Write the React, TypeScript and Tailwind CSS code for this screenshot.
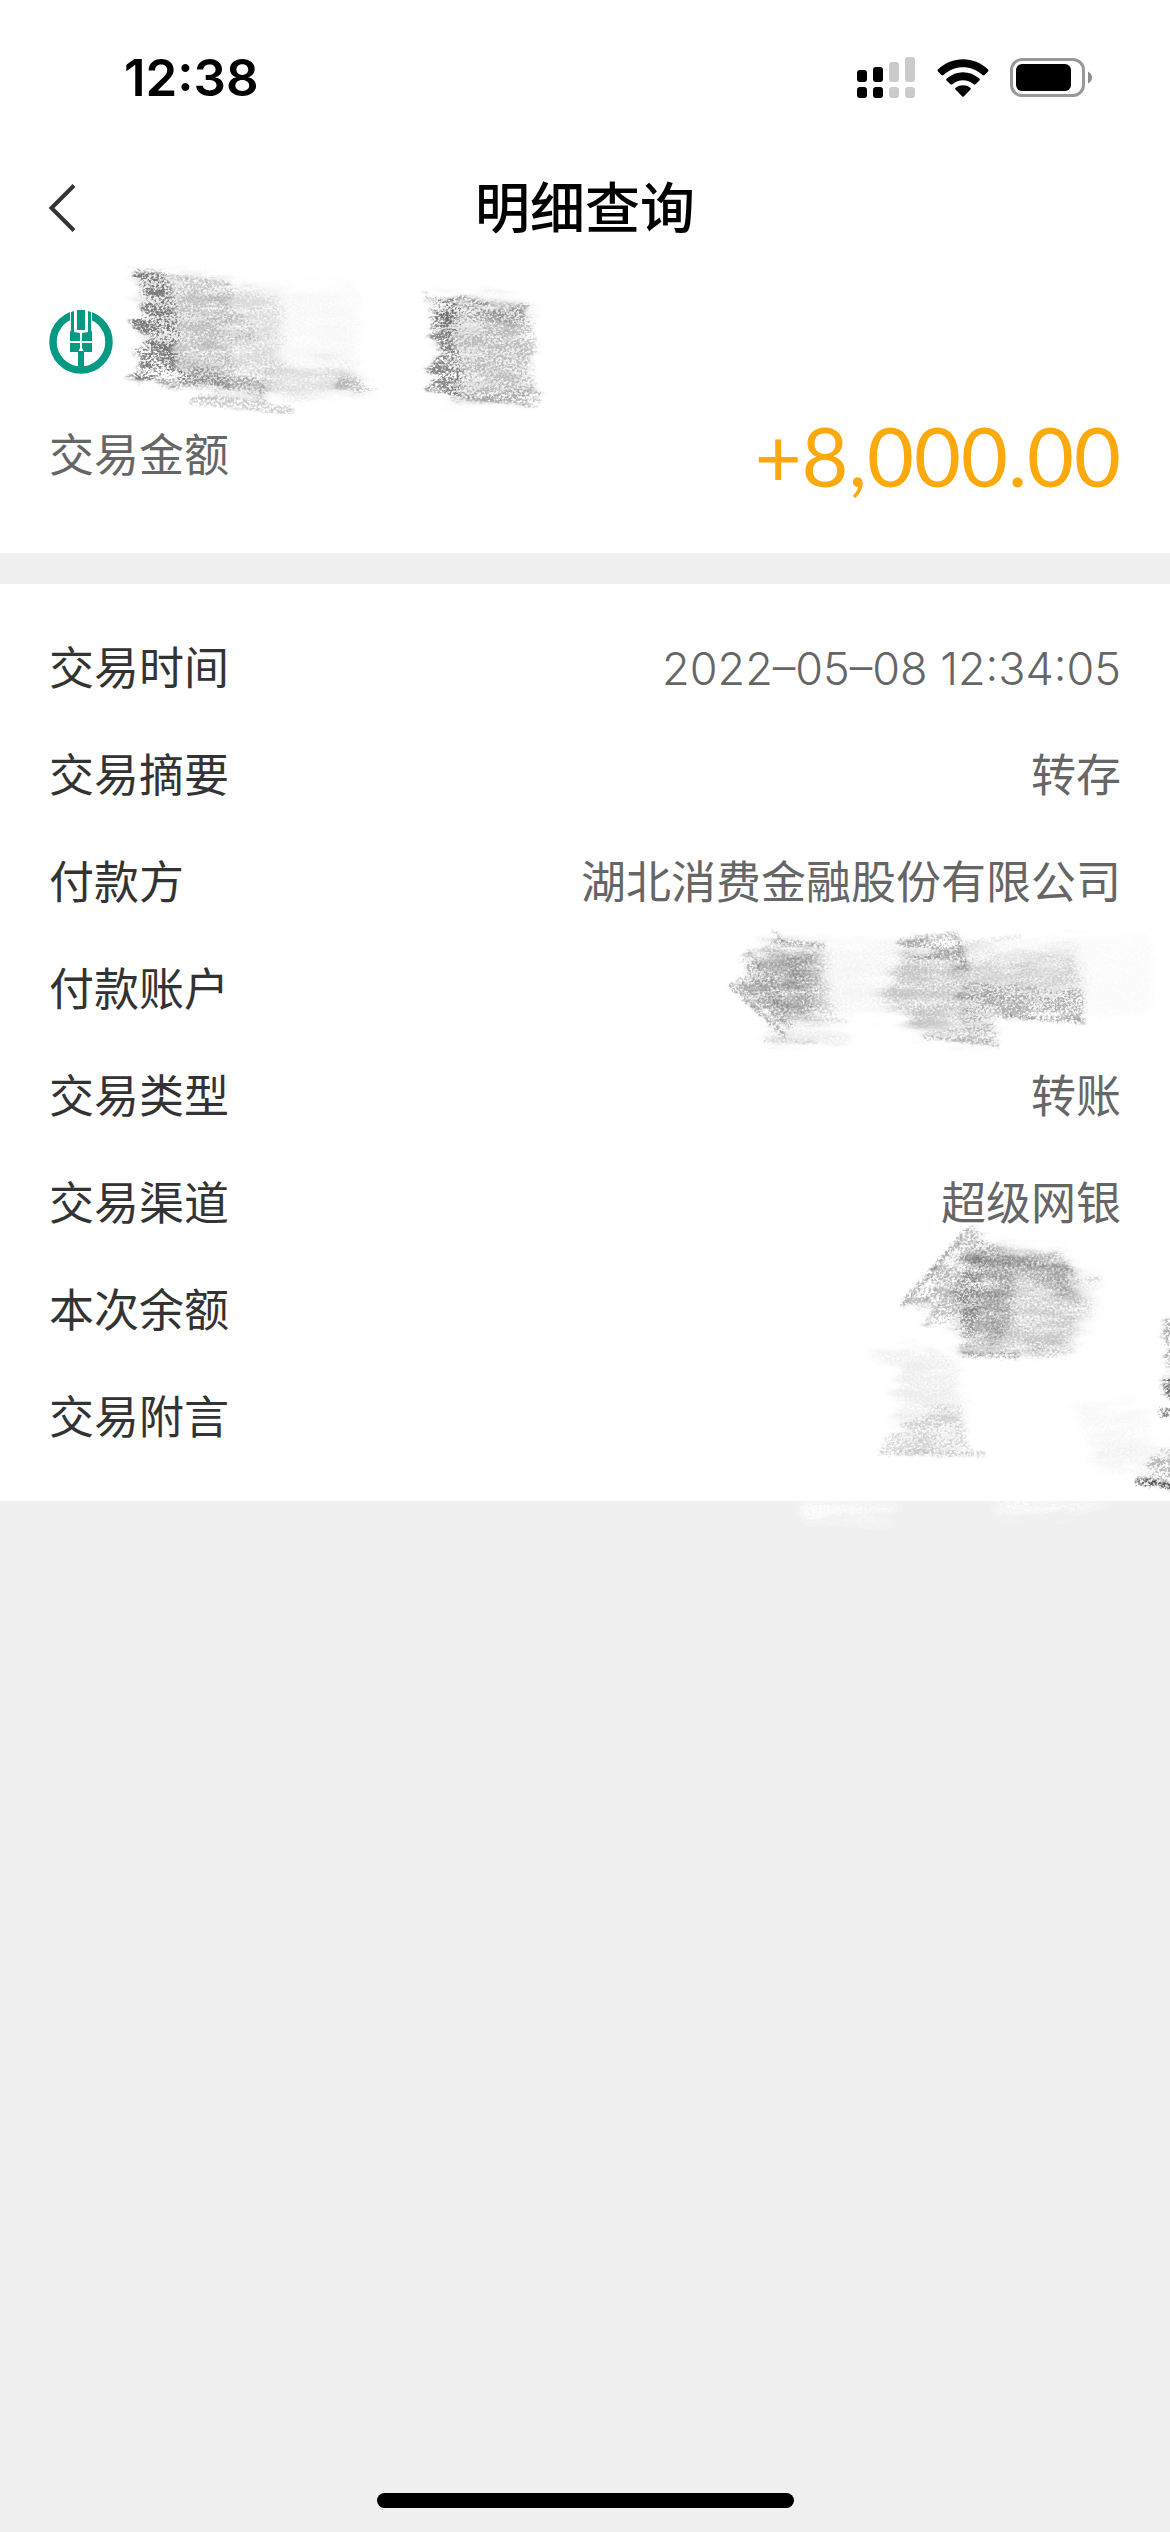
import React from 'react';

const details = [
  { label: '交易时间', value: '2022–05–08 12:34:05' },
  { label: '交易摘要', value: '转存' },
  { label: '付款方', value: '湖北消费金融股份有限公司' },
  { label: '付款账户', value: '' },
  { label: '交易类型', value: '转账' },
  { label: '交易渠道', value: '超级网银' },
  { label: '本次余额', value: '' },
  { label: '交易附言', value: '' },
];

const StatusIcons = () => (
  <div className="flex items-center">
    {/* Dual SIM signal */}
    <svg className="h-[42px] w-[58px]" viewBox="0 0 58 42">
      <g fill="#000">
        <rect x="0" y="13" width="10" height="12" rx="3" />
        <rect x="16" y="10" width="10" height="15" rx="3" />
        <rect x="0" y="30" width="10" height="11" rx="3" />
        <rect x="16" y="30" width="10" height="11" rx="3" />
      </g>
      <g fill="#cbcbcb">
        <rect x="32" y="5" width="10" height="20" rx="3" />
        <rect x="48" y="0" width="10" height="25" rx="3" />
        <rect x="32" y="30" width="10" height="11" rx="3" />
        <rect x="48" y="30" width="10" height="11" rx="3" />
      </g>
    </svg>

    <svg className="ml-[22px] h-[38px] w-[52px]" viewBox="0 0 52 38">
      <path d="M1 12.5Q0 11.5 1 10.500C15-3.200 37-3.200 51 10.500Q52 11.500 51 12.500L47.500 16Q46.500 16.800 45.500 16C34.500 5.600 17.500 5.600 6.500 16Q5.500 16.800 4.500 16Z" />
      <path d="M9.500 21.500Q8.700 20.500 9.700 19.600C19 11 33 11 42.300 19.600Q43.300 20.500 42.500 21.500L38.500 25.200Q37.600 26 36.600 25.200C30.500 19.800 21.500 19.800 15.400 25.200Q14.400 26 13.500 25.200Z" />
      <path d="M18.500 30.500Q17.700 29.500 18.700 28.700C23 25.400 29 25.400 33.300 28.700Q34.300 29.500 33.500 30.500L27 37.200Q26 38.200 25 37.200Z" />
    </svg>

    <svg className="ml-[21px] h-[40px] w-[82px]" viewBox="0 0 82 40">
      <rect x="1.500" y="1.500" width="72" height="36" rx="10.500" fill="none" stroke="#999" strokeWidth="3" />
      <rect x="6" y="6" width="55" height="27" rx="6" />
      <path d="M78 13.500Q82 15.500 82 19.500Q82 23.500 78 25.500Z" fill="#8e8e8e" />
    </svg>
  </div>
);

const BankLogo = () => (
  <svg className="h-16 w-16" viewBox="0 0 64 64">
    <circle cx="32" cy="32" r="28" fill="none" stroke="#069a85" strokeWidth="7.500" />
    <path d="M21 0H43V24H21Z" fill="#fff" />
    <g fill="#069a85">
      <path d="M28 0H36V20H28Z" />
      <path d="M22 2L25 1V22L31 23V31H21V22L22 20Z" />
      <path d="M42 2L39 1V22L33 23V31H43V22L42 20Z" />
      <path d="M21 33H31V38L29 42H21Z" />
      <path d="M43 33H33V38L35 42H43Z" />
      <path d="M29 41H35V60H29Z" />
    </g>
  </svg>
);

// Paper grain shared by all the pencil marks
const PencilDefs = () => (
  <svg className="absolute h-0 w-0" aria-hidden="true">
    <defs>
      <filter id="pencil" x="-20%" y="-20%" width="140%" height="140%" colorInterpolationFilters="sRGB">
        <feTurbulence type="fractalNoise" baseFrequency="0.03 0.11" numOctaves="3" seed="4" result="wave" />
        <feGaussianBlur in="SourceGraphic" stdDeviation="2" result="soft" />
        <feDisplacementMap in="soft" in2="wave" scale="24" xChannelSelector="R" yChannelSelector="G" result="rough" />
        <feTurbulence type="fractalNoise" baseFrequency="0.38 0.46" numOctaves="2" seed="9" result="fine" />
        <feComposite in="fine" in2="wave" operator="arithmetic" k2="0.7" k3="0.4" />
        <feColorMatrix type="matrix" values="0 0 0 0 0  0 0 0 0 0  0 0 0 0 0  6 0 0 0 -2.5" result="grain" />
        <feComposite in="rough" in2="grain" operator="in" />
      </filter>
      <filter id="pencil-line" x="-20%" y="-20%" width="140%" height="140%" colorInterpolationFilters="sRGB">
        <feGaussianBlur in="SourceGraphic" stdDeviation="1" result="soft" />
        <feTurbulence type="fractalNoise" baseFrequency="0.35" numOctaves="2" seed="5" result="fine" />
        <feDisplacementMap in="soft" in2="fine" scale="6" xChannelSelector="R" yChannelSelector="G" result="rough" />
        <feColorMatrix in="fine" type="matrix" values="0 0 0 0 0  0 0 0 0 0  0 0 0 0 0  4 0 0 0 -1.4" result="grain" />
        <feComposite in="rough" in2="grain" operator="in" />
      </filter>
      <filter id="smudge" x="-20%" y="-20%" width="140%" height="140%" colorInterpolationFilters="sRGB">
        <feTurbulence type="fractalNoise" baseFrequency="0.02 0.09" numOctaves="4" seed="2" result="wave" />
        <feGaussianBlur in="SourceGraphic" stdDeviation="6" result="soft" />
        <feDisplacementMap in="soft" in2="wave" scale="24" xChannelSelector="R" yChannelSelector="G" result="rough" />
        <feTurbulence type="fractalNoise" baseFrequency="0.4 0.5" numOctaves="2" seed="6" result="fine" />
        <feComposite in="fine" in2="wave" operator="arithmetic" k2="0.6" k3="0.4" />
        <feColorMatrix type="matrix" values="0 0 0 0 0  0 0 0 0 0  0 0 0 0 0  3 0 0 0 -0.8" result="grain" />
        <feComposite in="rough" in2="grain" operator="in" />
      </filter>
    </defs>
  </svg>
);

const AccountScribble = () => (
  <svg className="pointer-events-none absolute top-0 left-[120px] h-[160px] w-[430px]" viewBox="0 0 430 160" aria-hidden="true">
    <g filter="url(#smudge)" fill="#777">
      <path d="M20 16L100 22L160 40V120L60 118L22 60Z" opacity=".24" />
      <path d="M100 24L240 28L238 100L160 120L100 110Z" opacity=".06" />
      <path d="M60 112L230 104L248 132L130 136L60 124Z" opacity=".25" />
    </g>
    <g filter="url(#pencil)" fill="#555">
      <path d="M12 9L46 12L52 36L56 60L58 84L58 110L68 124L8 118L24 106L14 92L26 76L12 60L22 44Z" opacity=".75" />
      <path d="M46 14L110 22L112 50L134 60V82L112 84L114 130L56 118Z" opacity=".26" />
      <path d="M42 112L144 116L148 136L76 132Z" opacity=".4" />
      <path d="M222 114L242 120L256 132L216 132Z" opacity=".3" />
    </g>
    <path d="M70 140L174 151" stroke="#777" strokeWidth="8" opacity=".35" filter="url(#pencil-line)" />
    <path d="M14 12L110 24M40 124L110 122M78 136L148 142" stroke="#666" strokeWidth="4" opacity=".3" filter="url(#pencil-line)" />

    <g filter="url(#smudge)" fill="#777">
      <path d="M316 40H408V136L334 140Z" opacity=".22" />
    </g>
    <g filter="url(#pencil)" fill="#555">
      <path d="M302 38L338 41L336 58L334 84L342 112L340 134L304 132L320 118L308 106L322 90L306 68L316 54Z" opacity=".7" />
      <path d="M328 41L410 46L408 62L420 90L404 112L424 138L336 138Z" opacity=".3" />
      <path d="M304 39L408 45L406 62L312 58Z" opacity=".36" />
      <path d="M332 132L422 134L418 146L336 140Z" opacity=".36" />
    </g>
    <path d="M304 39L406 46M330 138L410 144" stroke="#666" strokeWidth="4" opacity=".3" filter="url(#pencil-line)" />
  </svg>
);

const DetailScribble = () => (
  <svg className="pointer-events-none absolute top-[316px] right-0 h-[640px] w-[470px]" viewBox="0 0 470 640" aria-hidden="true">
    {/* Payer account */}
    <g filter="url(#smudge)" fill="#777">
      <path d="M64 44L122 50L128 116L88 120L50 82Z" opacity=".5" />
      <path d="M88 60L112 62L108 116L92 116Z" opacity=".4" />
      <path d="M124 46L200 42L182 90L190 116L124 118Z" opacity=".08" />
      <path d="M204 44L266 56L264 118L216 124L180 98Z" opacity=".42" />
      <path d="M258 48L378 44L384 100L262 118Z" opacity=".22" />
      <path d="M384 36H452V114L384 118Z" opacity=".04" />
      <path d="M212 118L296 120L290 138L220 136Z" opacity=".28" />
      <path d="M66 130L146 136V144L68 140Z" opacity=".28" />
    </g>
    <g filter="url(#pencil)" fill="#555">
      <path d="M36 84L46 70L44 60L54 54L66 66L94 124L88 134Z" opacity=".38" />
      <path d="M62 46L114 50L118 80L104 118L76 110Z" opacity=".22" />
      <path d="M198 42L258 36L270 70L240 56L204 54Z" opacity=".42" />
      <path d="M262 88L382 90L386 120L300 116L262 118Z" opacity=".42" />
      <path d="M256 60L378 58L380 84L262 100Z" opacity=".14" />
      <path d="M226 132L252 128L292 122L300 144Z" opacity=".3" />
    </g>
    <g fill="none" stroke="#666" strokeWidth="5" filter="url(#pencil-line)">
      <path d="M30 84L87 137" opacity=".5" />
      <path d="M38 78L90 128M48 70L90 118M40 62L50 52L60 68M74 30L84 42" strokeWidth="4" opacity=".3" />
      <path d="M72 41L126 46" opacity=".45" />
      <path d="M198 42L256 34L268 70" opacity=".35" />
      <path d="M304 116L386 121" opacity=".5" />
      <path d="M224 136L300 145" strokeWidth="4" opacity=".4" />
      <path d="M262 44L322 36" strokeWidth="4" opacity=".15" />
      <path d="M90 119L148 121M64 140L118 142" strokeWidth="3" opacity=".25" />
    </g>

    {/* Balance */}
    <g filter="url(#smudge)" fill="#777">
      <path d="M270 344L370 358L386 400L366 452L264 452L250 400Z" opacity=".4" />
      <path d="M284 354L314 364L310 440L290 444Z" opacity=".32" />
      <path d="M364 384L400 376L388 430L364 450Z" opacity=".14" />
    </g>
    <g filter="url(#pencil)" fill="#555">
      <path d="M272 328L286 342L278 430L224 424L236 410L206 404Z" opacity=".36" />
      <path d="M280 354L366 358L370 372L376 400L316 374L306 440L262 450L258 386Z" opacity=".32" />
      <path d="M276 334L314 352L290 358Z" opacity=".3" />
      <path d="M326 440L366 446V458L330 456Z" opacity=".2" />
    </g>
    <g fill="none" stroke="#666" strokeWidth="6" filter="url(#pencil-line)">
      <path d="M270 328L202 406" opacity=".5" />
      <path d="M280 338L218 410M290 346L226 422" strokeWidth="5" opacity=".2" />
      <path d="M262 358L364 359M286 362L368 368L376 376" opacity=".35" />
      <path d="M262 454L320 456" strokeWidth="5" opacity=".5" />
      <path d="M374 382L402 378" strokeWidth="3" opacity=".3" />
    </g>

    {/* Postscript */}
    <g filter="url(#smudge)" fill="#777">
      <path d="M196 462L256 460L264 546L200 548Z" opacity=".13" />
      <path d="M376 504L450 505L444 556L378 540Z" opacity=".06" />
      <path d="M386 546L470 550V566H396Z" opacity=".1" />
      <path d="M176 454L240 452V458L176 460Z" opacity=".25" />
    </g>
    <g filter="url(#pencil)" fill="#555">
      <path d="M226 508L262 506L266 540L274 552L190 554L184 540Z" opacity=".2" />
      <path d="M464 420H480V468H466Z" opacity=".5" />
      <path d="M464 476H480V496H466Z" opacity=".9" />
      <path d="M454 556L480 548V582L440 582Z" opacity=".4" />
    </g>
    <g fill="none" stroke="#555" strokeWidth="5" filter="url(#pencil-line)">
      <path d="M178 552L286 554" opacity=".25" />
      <path d="M460 513H472" strokeWidth="9" opacity=".7" />
      <path d="M466 490H472" strokeWidth="12" opacity=".7" />
      <path d="M436 582L458 583L474 587" strokeWidth="7" stroke="#222" opacity=".7" />
    </g>

    {/* Eraser marks over the lower edge */}
    <g filter="url(#smudge)" fill="#fff">
      <path d="M96 602H196V616L110 624Z" opacity=".9" />
      <path d="M284 600H420L380 610L300 616Z" />
    </g>
  </svg>
);

const App = () => {
  return (
    <div className="relative flex min-h-screen flex-col bg-[#f0f0f0] font-[Inter,'Noto_Sans_CJK_SC',sans-serif] text-[45px]">
      <PencilDefs />

      {/* Status bar */}
      <div className="flex h-[156px] items-center justify-between bg-white pr-[78px] pl-[124px]">
        <span className="text-[51px] font-semibold text-black">12:38</span>
        <StatusIcons />
      </div>

      {/* Title bar */}
      <header className="grid h-[104px] grid-cols-[1fr_auto_1fr] items-center bg-white px-12">
        <button className="justify-self-start" aria-label="返回">
          <svg className="h-12 w-7" viewBox="0 0 28 48">
            <path d="M26 1.500L3.500 24L26 46.500" fill="none" stroke="#333" strokeWidth="4" />
          </svg>
        </button>
        <h1 className="text-[55px] font-medium text-black">明细查询</h1>
      </header>

      {/* Amount */}
      <section className="relative bg-white px-[49px] pt-[50px] pb-[46px]">
        <BankLogo />
        <AccountScribble />
        <div className="mt-[30px] flex h-[103px] items-center justify-between">
          <span className="text-[#666]">交易金额</span>
          <span className="font-[Lato,sans-serif] text-[81px] text-[#fca90d]">+8,000.00</span>
        </div>
      </section>

      {/* Details */}
      <section className="relative mt-[31px] bg-white px-[49px] pt-[31px] pb-[30px]">
        <dl>
          {details.map((item) => (
            <div key={item.label} className="flex h-[107px] items-center justify-between">
              <dt className="text-[#333]">{item.label}</dt>
              <dd className={/^\d/.test(item.value) ? 'font-[350] text-[#666]' : 'text-[#666]'}>{item.value}</dd>
            </div>
          ))}
        </dl>
        <DetailScribble />
      </section>

      {/* Home indicator */}
      <div className="mt-auto mb-6 h-[15px] w-[417px] self-center rounded-full bg-black" />
    </div>
  );
};

export default App;
